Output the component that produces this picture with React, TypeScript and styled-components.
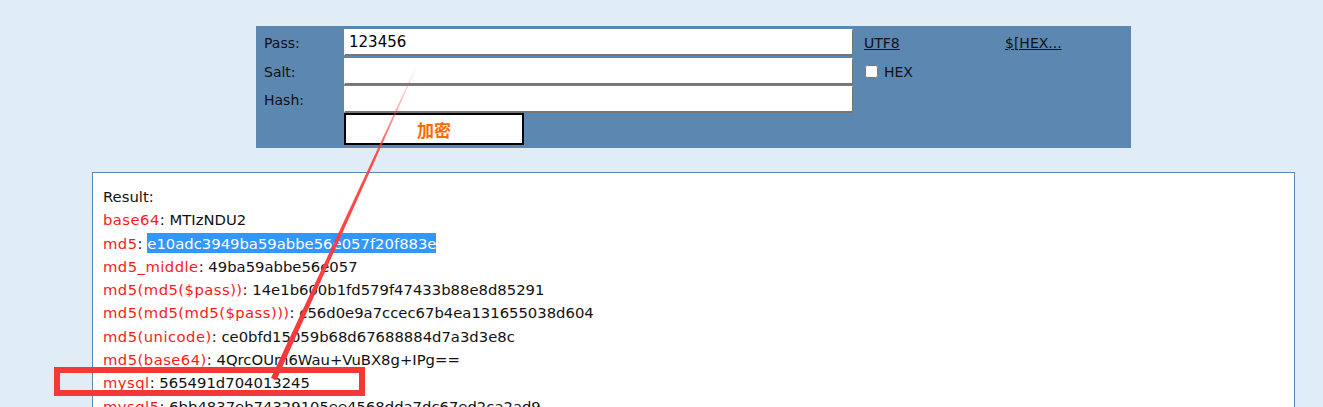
import React from 'react';
import styled, { createGlobalStyle } from 'styled-components';

const GlobalStyle = createGlobalStyle`
  html, body {
    margin: 0;
    padding: 0;
    background: #e1edf6;
    font-family: "DejaVu Sans", Verdana, sans-serif;
    font-size: 14px;
    color: #111;
    overflow: hidden;
  }
`;

const Page = styled.div`
  position: relative;
  width: 1323px;
  height: 407px;
  padding-top: 26px;
  box-sizing: border-box;
  overflow: hidden;
`;

const Panel = styled.form`
  margin: 0 0 0 256px;
  width: 875px;
  height: 122px;
  background: #5b87b1;
  box-sizing: border-box;
  padding: 3px 0 0 8px;
  display: grid;
  grid-template-columns: 80px 509px 141px 120px;
  grid-template-rows: 29px 28px 27px 32px;
`;

const Label = styled.label`
  display: flex;
  align-items: center;
  height: 27px;
`;

const Field = styled.input`
  width: 509px;
  height: 27px;
  box-sizing: border-box;
  margin: 0;
  border: 1px solid;
  border-color: #fff #767676 #767676 #fff;
  border-bottom-width: 2px;
  padding: 0 4px;
  font-family: "DejaVu Sans", Verdana, sans-serif;
  font-size: 15px;
  color: #000;
  background: #fff;
  outline: none;
`;

const Side = styled.div`
  display: flex;
  align-items: center;
  height: 27px;
  padding-left: 11px;
`;

const Link = styled.a`
  color: #111;
  text-decoration: underline;
  cursor: pointer;
`;

const Check = styled.input`
  margin: 0 6px 0 1px;
  width: 13px;
  height: 13px;
`;

const Submit = styled.button`
  grid-column: 2;
  width: 180px;
  height: 32px;
  margin: 0;
  background: #fff;
  border: 2px solid #000;
  color: #ff6a00;
  font-family: "Noto Sans CJK SC", sans-serif;
  font-weight: 700;
  font-size: 17px;
  line-height: 1;
  cursor: pointer;
`;

const Result = styled.div`
  margin: 24px 0 0 92px;
  width: 1203px;
  height: 260px;
  box-sizing: border-box;
  background: #fff;
  border: 1px solid #5b87b1;
  border-bottom: none;
  padding: 12px 10px 0;
  font-size: 14.8px;
  line-height: 23.3px;
  color: #111;
`;

const Line = styled.div`
  white-space: nowrap;
`;

const Key = styled.span`
  color: #ff1a1a;
  letter-spacing: 0.45px;
`;

const Selected = styled.span`
  background: #3297fd;
  color: #fff;
  padding: 2px 0 1px;
`;

const Overlay = styled.svg`
  position: absolute;
  left: 0;
  top: 0;
  pointer-events: none;
`;

const rows: [string, string][] = [
  ['base64', 'MTIzNDU2'],
  ['md5', 'e10adc3949ba59abbe56e057f20f883e'],
  ['md5_middle', '49ba59abbe56e057'],
  ['md5(md5($pass))', '14e1b600b1fd579f47433b88e8d85291'],
  ['md5(md5(md5($pass)))', 'c56d0e9a7ccec67b4ea131655038d604'],
  ['md5(unicode)', 'ce0bfd15059b68d67688884d7a3d3e8c'],
  ['md5(base64)', '4QrcOUm6Wau+VuBX8g+IPg=='],
  ['mysql', '565491d704013245'],
  ['mysql5', '6bb4837eb74329105ee4568dda7dc67ed2ca2ad9'],
];

const App = () => {
  return (
    <Page>
      <GlobalStyle />
      <Panel onSubmit={(e) => e.preventDefault()}>
        <Label>Pass:</Label>
        <Field defaultValue="123456" />
        <Side>
          <Link>UTF8</Link>
        </Side>
        <Side>
          <Link>$[HEX...</Link>
        </Side>

        <Label>Salt:</Label>
        <Field />
        <Side>
          <Check type="checkbox" />
          HEX
        </Side>
        <div />

        <Label>Hash:</Label>
        <Field />
        <div />
        <div />

        <Submit type="submit">加密</Submit>
      </Panel>

      <Result>
        <Line>Result:</Line>
        {rows.map(([k, v]) => (
          <Line key={k}>
            <Key>{k}</Key>: {k === 'md5' ? <Selected>{v}</Selected> : v}
          </Line>
        ))}
      </Result>

      <Overlay width={1323} height={407} viewBox="0 0 1323 407">
        <defs>
          <linearGradient id="fade" x1="0" y1="62" x2="0" y2="378" gradientUnits="userSpaceOnUse">
            <stop offset="0" stopColor="#ff3b3b" stopOpacity="0" />
            <stop offset="0.3" stopColor="#ff3b3b" stopOpacity="0.9" />
            <stop offset="1" stopColor="#f43636" stopOpacity="1" />
          </linearGradient>
        </defs>
        <polygon points="418,62 419,62 276.5,380 271,378" fill="url(#fade)" />
        <rect x={57} y={370} width={305} height={23} fill="none" stroke="#f43838" strokeWidth={6} />
      </Overlay>
    </Page>
  );
};

export default App;
